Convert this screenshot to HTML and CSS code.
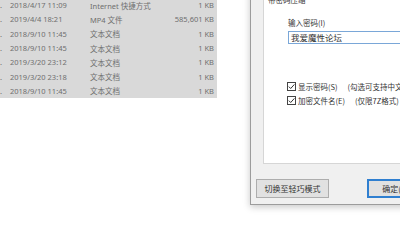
FILE: index.html
```html
<!DOCTYPE html>
<html lang="zh-CN">
<head>
<meta charset="utf-8">
<link rel="stylesheet" href="styles.css">
</head>
<body>
<div class="desk">
  <div class="files">
    <div class="row"><span class="c-name">.</span><span class="c-date">2018/4/17 11:09</span><span class="c-type">Internet 快捷方式</span><span class="c-size">1 KB</span></div>
    <div class="row"><span class="c-name">.</span><span class="c-date">2019/4/4 18:21</span><span class="c-type">MP4 文件</span><span class="c-size">585,601 KB</span></div>
    <div class="row"><span class="c-name">.</span><span class="c-date">2018/9/10 11:45</span><span class="c-type">文本文档</span><span class="c-size">1 KB</span></div>
    <div class="row"><span class="c-name">.</span><span class="c-date">2018/9/10 11:45</span><span class="c-type">文本文档</span><span class="c-size">1 KB</span></div>
    <div class="row"><span class="c-name">.</span><span class="c-date">2019/3/20 23:12</span><span class="c-type">文本文档</span><span class="c-size">1 KB</span></div>
    <div class="row"><span class="c-name">.</span><span class="c-date">2019/3/20 23:18</span><span class="c-type">文本文档</span><span class="c-size">1 KB</span></div>
    <div class="row"><span class="c-name">.</span><span class="c-date">2018/9/10 11:45</span><span class="c-type">文本文档</span><span class="c-size">1 KB</span></div>
  </div>

  <div class="dialog">
    <div class="panel">
      <div class="group-title">带密码压缩</div>
      <div class="field-label">输入密码(I)</div>
      <div class="input">我爱魔性论坛</div>
      <div class="checks">
        <div class="check-row">
          <span class="box"><svg viewBox="0 0 9 9" width="9" height="9"><path d="M1.8 4.6 L3.7 6.5 L7.4 2.4" fill="none" stroke="#333" stroke-width="1"/></svg></span>
          <span class="check-text">显示密码(S)</span>
          <span class="check-note">(勾选可支持中文密码)</span>
        </div>
        <div class="check-row">
          <span class="box"><svg viewBox="0 0 9 9" width="9" height="9"><path d="M1.8 4.6 L3.7 6.5 L7.4 2.4" fill="none" stroke="#333" stroke-width="1"/></svg></span>
          <span class="check-text">加密文件名(E)</span>
          <span class="check-note">(仅限7Z格式)</span>
        </div>
      </div>
    </div>
    <div class="buttons">
      <div class="btn btn-mode">切换至轻巧模式</div>
      <div class="btn btn-ok">确定(O)</div>
    </div>
  </div>
</div>
</body>
</html>
```

FILE: styles.css
```css
html, body {
  margin: 0;
  padding: 0;
  background: #ffffff;
}

body {
  width: 400px;
  height: 230px;
  overflow: hidden;
  font-family: "Noto Sans", "Noto Sans CJK SC", sans-serif;
}

.desk {
  display: flex;
  align-items: flex-start;
}

.files {
  width: 217px;
  margin-top: -2px;
  background: #d9d9d9;
  flex-shrink: 0;
}

.row {
  display: grid;
  grid-template-columns: 10px 80px 1fr auto;
  height: 14.3px;
  align-items: center;
  font-size: 7.5px;
  color: #6f6f6f;
  white-space: nowrap;
}

.c-name {
  padding-left: 0;
  overflow: hidden;
}

.c-size {
  padding-right: 3px;
  text-align: right;
}

.dialog {
  margin-left: 33px;
  margin-top: -20px;
  width: 200px;
  height: 223px;
  flex-shrink: 0;
  border: 1px solid #9c9c9c;
  background: #f0f0f0;
  box-shadow: 0 2px 7px rgba(0, 0, 0, 0.22);
  display: flex;
  flex-direction: column;
  font-family: "Noto Sans CJK SC", "Noto Sans", sans-serif;
}

.panel {
  margin-left: 12px;
  margin-top: 4px;
  height: 177px;
  border: 1px solid #d6d6d6;
  border-right: none;
  background: #ffffff;
  display: flex;
  flex-direction: column;
}

.group-title {
  margin-left: 4px;
  margin-top: 9px;
  font-size: 7.5px;
  line-height: 9px;
  color: #333;
}

.field-label {
  margin-left: 24px;
  margin-top: 14px;
  font-size: 7.5px;
  line-height: 9px;
  color: #333;
}

.input {
  margin-left: 24px;
  margin-top: 4px;
  height: 11px;
  border: 1px solid #7aa7d8;
  padding-left: 2px;
  font-size: 8.5px;
  line-height: 11px;
  color: #333;
  white-space: nowrap;
}

.checks {
  margin-left: 23px;
  margin-top: 35px;
  display: flex;
  flex-direction: column;
}

.check-row {
  display: flex;
  align-items: center;
  height: 14px;
  font-size: 7.5px;
  color: #333;
  white-space: nowrap;
}

.box {
  width: 9px;
  height: 9px;
  box-sizing: border-box;
  border: 1px solid #444;
  background: #fff;
  display: flex;
  align-items: center;
  justify-content: center;
  margin-right: 2px;
}

.box svg {
  display: block;
  flex-shrink: 0;
}

.check-note {
  margin-left: 10px;
}

.buttons {
  display: flex;
  margin-top: 15px;
  margin-left: 5px;
}

.btn {
  height: 19px;
  box-sizing: border-box;
  background: #e1e1e1;
  border: 1px solid #adadad;
  font-size: 8px;
  line-height: 17px;
  color: #333;
  text-align: center;
  white-space: nowrap;
}

.btn-mode {
  width: 73px;
}

.btn-ok {
  margin-left: 38px;
  width: 58px;
  border: 2px solid #2f7fd0;
  line-height: 15px;
}
```
